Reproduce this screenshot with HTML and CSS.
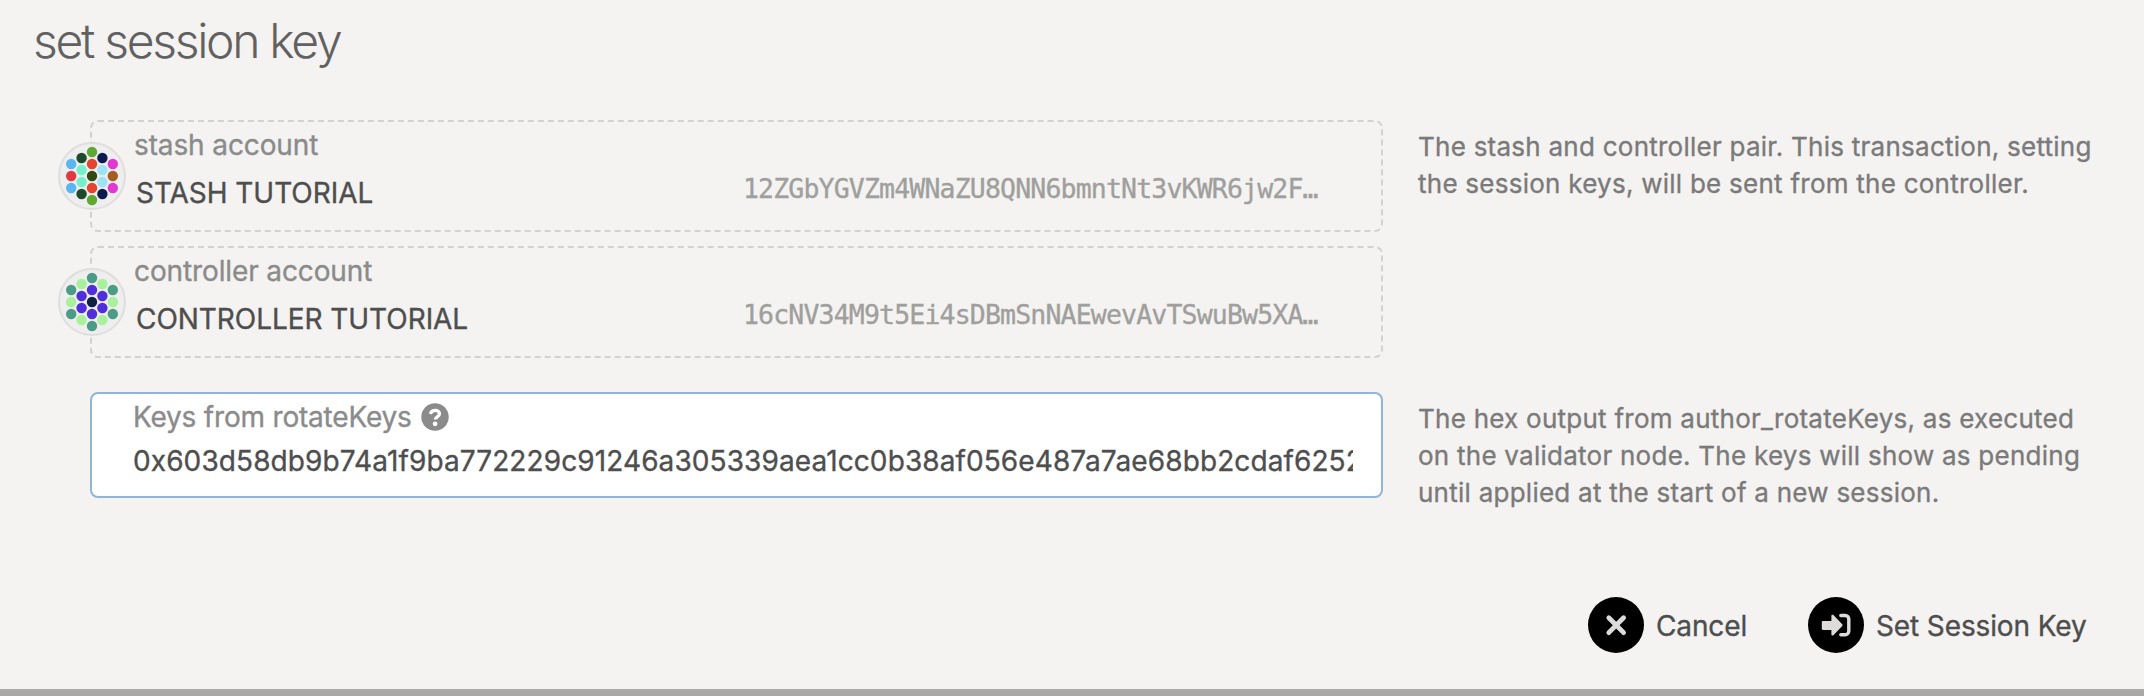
FILE: index.html
```html
<!DOCTYPE html>
<html lang="en">
<head>
<meta charset="utf-8">
<title>set session key</title>
<link rel="stylesheet" href="styles.css">
</head>
<body>
<main class="modal">
  <h1 class="title"><span>set session key</span></h1>
  <section class="row row-accounts">
    <div class="fields">
      <div class="account">
        <svg class="avatar" viewBox="0 0 68 68">
          <circle cx="34" cy="34" r="33" fill="#eeeeee" stroke="#dfdedd" stroke-width="2"/>
          <g fill="#5fa933"><circle cx="34" cy="10" r="5.2"/><circle cx="34" cy="58" r="5.2"/></g>
          <g fill="#e3452e"><circle cx="34" cy="22" r="5.2"/><circle cx="34" cy="46" r="5.2"/></g>
          <circle cx="34" cy="34" r="5.2" fill="#2f4a12"/>
          <g fill="#1e4a2c"><circle cx="23.6" cy="16" r="5.2"/><circle cx="23.6" cy="52" r="5.2"/></g>
          <g fill="#74f0cb"><circle cx="23.6" cy="28" r="5.2"/><circle cx="23.6" cy="40" r="5.2"/></g>
          <g fill="#0d1b4c"><circle cx="44.4" cy="16" r="5.2"/><circle cx="44.4" cy="52" r="5.2"/></g>
          <g fill="#9de2f6"><circle cx="44.4" cy="28" r="5.2"/><circle cx="44.4" cy="40" r="5.2"/></g>
          <g fill="#58b7f0"><circle cx="13.2" cy="22" r="5.2"/><circle cx="13.2" cy="46" r="5.2"/></g>
          <circle cx="13.2" cy="34" r="5.2" fill="#e2383f"/>
          <g fill="#e238d2"><circle cx="54.8" cy="22" r="5.2"/><circle cx="54.8" cy="46" r="5.2"/></g>
          <circle cx="54.8" cy="34" r="5.2" fill="#a45d23"/>
        </svg>
        <div class="label"><span>stash account</span></div>
        <div class="account-line">
          <span class="name">STASH TUTORIAL</span>
          <span class="address">12ZGbYGVZm4WNaZU8QNN6bmntNt3vKWR6jw2F…</span>
        </div>
      </div>
      <div class="account">
        <svg class="avatar" viewBox="0 0 68 68">
          <circle cx="34" cy="34" r="33" fill="#eeeeee" stroke="#dfdedd" stroke-width="2"/>
          <g fill="#4a9c86"><circle cx="34" cy="10" r="5.2"/><circle cx="34" cy="58" r="5.2"/><circle cx="13.2" cy="22" r="5.2"/><circle cx="13.2" cy="46" r="5.2"/><circle cx="54.8" cy="22" r="5.2"/><circle cx="54.8" cy="46" r="5.2"/></g>
          <g fill="#a8f09b"><circle cx="23.6" cy="16" r="5.2"/><circle cx="23.6" cy="52" r="5.2"/><circle cx="44.4" cy="16" r="5.2"/><circle cx="44.4" cy="52" r="5.2"/><circle cx="13.2" cy="34" r="5.2"/><circle cx="54.8" cy="34" r="5.2"/></g>
          <g fill="#502edb"><circle cx="34" cy="22" r="5.2"/><circle cx="34" cy="46" r="5.2"/><circle cx="23.6" cy="28" r="5.2"/><circle cx="23.6" cy="40" r="5.2"/><circle cx="44.4" cy="28" r="5.2"/><circle cx="44.4" cy="40" r="5.2"/></g>
          <circle cx="34" cy="34" r="5.2" fill="#0f2040"/>
        </svg>
        <div class="label"><span>controller account</span></div>
        <div class="account-line">
          <span class="name">CONTROLLER TUTORIAL</span>
          <span class="address">16cNV34M9t5Ei4sDBmSnNAEwevAvTSwuBw5XA…</span>
        </div>
      </div>
    </div>
    <p class="help">The stash and controller pair. This transaction, setting<br>the session keys, will be sent from the controller.</p>
  </section>
  <section class="row row-keys">
    <div class="keys">
      <div class="label"><span>Keys from rotateKeys</span>
        <svg class="question" viewBox="0 0 28 28">
          <circle cx="14" cy="14" r="13.7" fill="#8b8b8b"/>
          <path d="M9.2 10.8C10.2 8.5 11.9 7.3 14.2 7.3c2.5 0 4.3 1.4 4.3 3.4 0 3.1-4.2 3-4.2 5.8" fill="none" stroke="#fff" stroke-width="3.3"/>
          <circle cx="14.1" cy="20.8" r="2.4" fill="#fff"/>
        </svg>
      </div>
      <div class="key-value">0x603d58db9b74a1f9ba772229c91246a305339aea1cc0b38af056e487a7ae68bb2cdaf6252</div>
    </div>
    <p class="help">The hex output from author_rotateKeys, as executed<br>on the validator node. The keys will show as pending<br>until applied at the start of a new session.</p>
  </section>
  <footer class="actions">
    <button class="action cancel">
      <svg class="action-icon" viewBox="0 0 56 56"><circle cx="28" cy="28" r="28"/><path d="M20.8 20.8l14.8 14.8M35.6 20.8L20.8 35.6" fill="none" stroke="#dddcdb" stroke-width="4.8" stroke-linecap="round"/></svg>
      <span>Cancel</span>
    </button>
    <button class="action submit">
      <svg class="action-icon" viewBox="0 0 56 56"><circle cx="28" cy="28" r="28"/><path d="M15 24h8.4v-5.2c0-1.1 1.2-1.5 2-.8l8.6 9c.7.7.7 1.5 0 2.2l-8.6 9c-.8.7-2 .3-2-.8V33H15c-.7 0-1.2-.5-1.2-1.2v-6.6C13.8 24.5 14.3 24 15 24z" fill="#dddcdb"/><path d="M32.8 18.5h4.4a3.6 3.6 0 0 1 3.6 3.6v12a3.6 3.6 0 0 1-3.6 3.6h-4.4" fill="none" stroke="#dddcdb" stroke-width="3.4" stroke-linecap="round"/></svg>
      <span>Set Session Key</span>
    </button>
  </footer>
</main>
</body>
</html>
```
FILE: styles.css
```css
* { box-sizing: border-box; }
body {
  margin: 0;
  background: #f4f3f1;
  font-family: Inter, "Liberation Sans", sans-serif;
  font-size: 28px;
  font-weight: 400;
  line-height: 36px;
  letter-spacing: -0.12px;
  -webkit-text-stroke: 0.35px currentColor;
  color: #4e4e4e;
}
.modal {
  display: flex;
  flex-direction: column;
  height: 696px;
  border-bottom: 7px solid #a9a8a7;
  overflow: hidden;
}
.title {
  margin: 0;
  padding: 11px 0 0 33px;
  height: 120px;
  font-size: 48px;
  line-height: 60px;
  font-weight: 300;
  letter-spacing: -2.3px;
  -webkit-text-stroke: 0;
  color: #616161;
}
.row {
  display: grid;
  grid-template-columns: 1293px 1fr;
  column-gap: 35px;
  padding-left: 90px;
}
.row-accounts { height: 272px; }
.row-keys { height: 205px; }
.fields {
  display: flex;
  flex-direction: column;
  gap: 14px;
}
.account {
  position: relative;
  height: 112px;
  padding: 5px 0 0 42px;
  border: 2px dashed #d3d2d0;
  border-radius: 8px;
}
.avatar {
  position: absolute;
  left: -34px;
  top: 20px;
  width: 68px;
  height: 68px;
}
.label {
  display: flex;
  align-items: center;
  gap: 9px;
  height: 36px;
  color: #8b8b8b;
}
.account-line {
  display: flex;
  margin-top: 12px;
  padding-left: 2px;
}
.name {
  width: 607px;
  letter-spacing: -0.05px;
}
.address {
  margin-top: -4px;
  font-family: "DejaVu Sans Mono", monospace;
  font-size: 26.5px;
  letter-spacing: -0.83px;
  color: #9f9f9d;
}
.help {
  margin: 0;
  padding-top: 8px;
  font-size: 26px;
  line-height: 37px;
  letter-spacing: 0.25px;
  color: #7a7a7a;
  white-space: nowrap;
}
.keys {
  height: 106px;
  padding: 5px 28px 0 41px;
  background: #fff;
  border: 2px solid #8fb6d6;
  border-radius: 8px;
}
.question { width: 28px; height: 28px; }
.keys .label { letter-spacing: -0.2px; }
.key-value {
  margin-top: 8px;
  letter-spacing: 0.1px;
  overflow: hidden;
  white-space: nowrap;
}
.actions {
  display: flex;
  padding-left: 1588px;
}
.action {
  display: flex;
  align-items: center;
  gap: 12px;
  height: 56px;
  padding: 0;
  border: 0;
  background: none;
  font: inherit;
  letter-spacing: inherit;
  color: inherit;
  white-space: nowrap;
}
.action span { padding-top: 2px; }
.cancel { width: 220px; }
.action-icon { width: 56px; height: 56px; }
```
